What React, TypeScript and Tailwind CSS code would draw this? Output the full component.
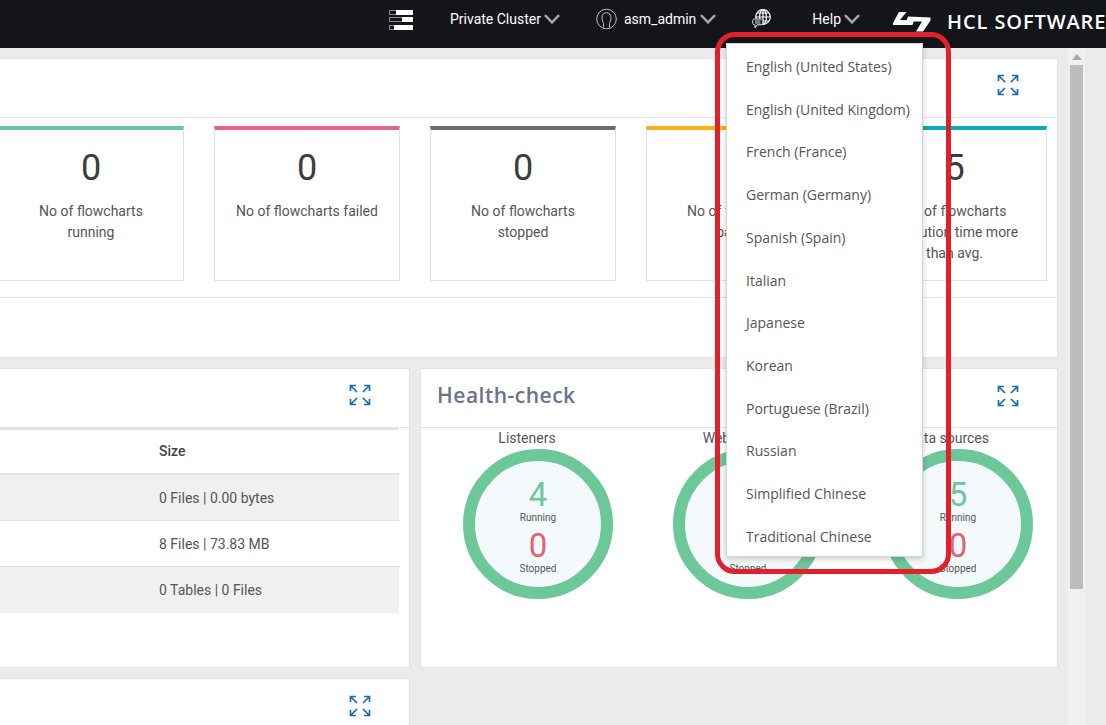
import React from "react";

const languages = [
  "English (United States)",
  "English (United Kingdom)",
  "French (France)",
  "German (Germany)",
  "Spanish (Spain)",
  "Italian",
  "Japanese",
  "Korean",
  "Portuguese (Brazil)",
  "Russian",
  "Simplified Chinese",
  "Traditional Chinese",
];

const Chevron = () => (
  <svg width="16" height="10" viewBox="0 0 16 10" fill="none" className="shrink-0">
    <path d="M1 1.2 L8 8.4 L15 1.2" stroke="#a8a8a8" strokeWidth="2.4" />
  </svg>
);

const ServerIcon = () => (
  <svg width="24" height="20" viewBox="0 0 24 20" className="shrink-0">
    <rect x="0.5" y="0.5" width="23" height="4" fill="none" stroke="#8a8a8a" />
    <rect x="7" y="0" width="17" height="5" fill="#fff" />
    <rect x="0.5" y="7.5" width="23" height="4" fill="none" stroke="#8a8a8a" />
    <rect x="13" y="7" width="11" height="5" fill="#fff" />
    <rect x="0.5" y="15.5" width="23" height="4" fill="none" stroke="#8a8a8a" />
    <rect x="5" y="15" width="19" height="5" fill="#fff" />
  </svg>
);

const UserIcon = () => (
  <svg width="21" height="22" viewBox="0 0 21 22" fill="none" stroke="#c4c4c4" strokeWidth="1" className="shrink-0">
    <circle cx="10.5" cy="11" r="9.8" />
    <path d="M7.5 19.5 V15.5 C7.5 14.5 6 12.5 6 9.5 C6 6.5 8 4.7 10.5 4.7 C13 4.7 15 6.5 15 9.5 C15 12.5 13.5 14.5 13.5 15.5 V19.5" />
  </svg>
);

const GlobeIcon = () => (
  <svg width="19" height="20" viewBox="0 0 19 20" fill="none" className="shrink-0">
    <circle cx="11" cy="8" r="7.3" stroke="#fff" strokeWidth="1.2" />
    <ellipse cx="11" cy="8" rx="3.4" ry="7.3" stroke="#fff" strokeWidth="1.2" />
    <path d="M11 0.7 V15.3 M3.7 8 H18.3 M5 4 H17 M5 12 H17" stroke="#fff" strokeWidth="1.2" />
    <path d="M2.5 10 H9 C10 10 10.8 10.8 10.8 11.8 V14 C10.8 15 10 15.8 9 15.8 H5 L3 18.8 V15.8 H2.5 C1.5 15.8 0.7 15 0.7 14 V11.8 C0.7 10.8 1.5 10 2.5 10 Z" fill="#14151a" stroke="#e5e5e5" strokeWidth="1" />
    <path d="M3 12 H8.5 M3 14 H8.5" stroke="#e5e5e5" strokeWidth="1" />
  </svg>
);

const HclLogo = () => (
  <svg width="38" height="20" viewBox="0 0 38 20" fill="#fff" className="shrink-0">
    <polygon points="6,0 13.5,0 7,8 21,8.5 19.5,13 0,13 0,11" />
    <polygon points="15,4.5 37.5,5.5 37.5,8.5 30,19.5 23,19.5 29,9.5 13,9.5" />
  </svg>
);

const ExpandIcon = () => (
  <svg width="22" height="22" viewBox="0 0 22 22" fill="none" stroke="#1b6cab" strokeWidth="1.7" className="shrink-0">
    <path d="M1.5 7 V1.5 H7 M1.5 1.5 L8 8" />
    <path d="M20.5 7 V1.5 H15 M20.5 1.5 L14 8" />
    <path d="M1.5 15 V20.5 H7 M1.5 20.5 L8 14" />
    <path d="M20.5 15 V20.5 H15 M20.5 20.5 L14 14" />
  </svg>
);

const StatCard = ({ value, label, color, width = "w-[186px]" }: { value: number; label: React.ReactNode; color: string; width?: string }) => (
  <div className={`h-[155px] border border-[#dfe3e5] border-t-4 text-center ${width} ${color}`}>
    <div className="pt-[18px] text-[36px] leading-[40px] text-[#3d3d3d]">{value}</div>
    <div className="mt-[13px] text-sm leading-[21px] text-[#555]">{label}</div>
  </div>
);

const HealthRing = ({ label, labelClass, running }: { label: string; labelClass: string; running: number }) => (
  <div className="w-[150px]">
    <div className={`text-center text-sm leading-[21px] text-[#555] whitespace-nowrap ${labelClass}`}>{label}</div>
    <div className="w-[150px] h-[150px] rounded-full border-[12px] border-[#6cc799] bg-[#f4f9fc] flex flex-col items-center text-center">
      <div className="mt-[15px] text-[33px] leading-[38px] text-[#6cc799]">{running}</div>
      <div className="-mt-[2px] text-[10px] leading-[12px] text-[#555]">Running</div>
      <div className="mt-[3px] text-[33px] leading-[38px] text-[#e0636f]">0</div>
      <div className="-mt-[2px] text-[10px] leading-[12px] text-[#555]">Stopped</div>
    </div>
  </div>
);

export default function App() {
  return (
    <div className="relative w-[1106px] h-[725px] overflow-hidden bg-[#ebebeb] font-['Roboto',sans-serif]">
      <header className="h-12 bg-[#14151a] flex items-center pl-[389px] pb-[10px] text-sm text-white whitespace-nowrap overflow-hidden">
        <span className="mt-[2px]"><ServerIcon /></span>
        <span className="ml-[37px]">Private Cluster</span>
        <span className="ml-[3px]"><Chevron /></span>
        <span className="ml-9"><UserIcon /></span>
        <span className="ml-[7px]">asm_admin</span>
        <span className="ml-1"><Chevron /></span>
        <span className="ml-9"><GlobeIcon /></span>
        <span className="ml-[41px]">Help</span>
        <span className="ml-[3px]"><Chevron /></span>
        <span className="ml-[33px] mt-[6px]"><HclLogo /></span>
        <span className="ml-4 mt-[6px] font-['Open_Sans',sans-serif] font-semibold text-[20px] tracking-[0.9px]">HCL SOFTWARE</span>
      </header>

      <div className="flex h-[677px]">
        <main className="w-[1068px] overflow-hidden pt-[10px]">
          <div className="-ml-3 w-[1070px] flex flex-col gap-[10px]">
            <section className="h-[300px] bg-white border border-[#e3e3e3]">
              <div className="h-[59px] border-b border-[#e3e3e3] flex items-center justify-end pr-[38px] pb-[6px]">
                <ExpandIcon />
              </div>
              <div className="flex gap-[30px] pl-[9px] pt-2 pb-4 border-b border-[#e3e3e3]">
                <StatCard value={0} label={<>No of flowcharts<br />running</>} color="border-t-[#6cc799]" />
                <StatCard value={0} label="No of flowcharts failed" color="border-t-[#e9657f]" />
                <StatCard value={0} label={<>No of flowcharts<br />stopped</>} color="border-t-[#6d6d6d]" />
                <StatCard value={0} label={<>No of flowcharts<br />paused</>} color="border-t-[#f7b217]" />
                <StatCard value={5} width="w-[185px]" label={<>No of flowcharts<br />execution time more<br />than avg.</>} color="border-t-[#0badb8]" />
              </div>
            </section>

            <div className="flex gap-[10px]">
              <section className="w-[422px] h-[300px] bg-white border border-[#e3e3e3]">
                <div className="h-[59px] border-b border-[#e3e3e3] flex items-center justify-end pr-[38px] pb-[6px]">
                  <ExpandIcon />
                </div>
                <div className="mr-[10px] text-sm text-[#555]">
                  <div className="h-[47px] border-t-2 border-b-2 border-[#e3e3e3] pl-[170px] pb-[2px] flex items-center font-medium text-[#444]">Size</div>
                  <div className="h-[46px] bg-[#f0f0f0] border-b border-[#e0e0e0] pl-[170px] flex items-center">0 Files | 0.00 bytes</div>
                  <div className="h-[46px] border-b border-[#e0e0e0] pl-[170px] flex items-center">8 Files | 73.83 MB</div>
                  <div className="h-[46px] bg-[#f0f0f0] pl-[170px] flex items-center">0 Tables | 0 Files</div>
                </div>
              </section>

              <section className="w-[638px] h-[300px] bg-white border border-[#e3e3e3]">
                <div className="h-[59px] border-b border-[#e3e3e3] flex items-center justify-between pl-4 pr-[38px] pb-[5px]">
                  <span className="font-['Open_Sans',sans-serif] text-[21px] font-semibold tracking-[0.5px] text-[#6b7390]">Health-check</span>
                  <ExpandIcon />
                </div>
                <div className="flex gap-[60px] pl-[42px]">
                  <HealthRing label="Listeners" labelClass="pr-[22px]" running={4} />
                  <HealthRing label="Web services" labelClass="pr-2" running={3} />
                  <HealthRing label="Data sources" labelClass="pr-5" running={5} />
                </div>
              </section>
            </div>

            <section className="w-[422px] h-[100px] bg-white border border-[#e3e3e3]">
              <div className="h-[59px] flex items-center justify-end pr-[38px] pb-[6px]">
                <ExpandIcon />
              </div>
            </section>
          </div>
        </main>

        <div className="w-[17px] bg-[#f0f0f0] flex flex-col items-center">
          <div className="mt-[6px] w-0 h-0 border-x-[5px] border-x-transparent border-b-[6px] border-b-[#a8a8a8]" />
          <div className="mt-[5px] w-[13px] h-[524px] bg-[#bdbdbd]" />
        </div>
      </div>

      <div className="absolute left-[726px] top-[43px] w-[197px] h-[514px] bg-white border border-[#d6d6d6] shadow-[0_2px_6px_rgba(0,0,0,0.2)] pt-[1.6px] font-['Open_Sans',sans-serif] text-sm text-[#555]">
        {languages.map((lang) => (
          <div key={lang} className="h-[42.73px] pl-[19px] flex items-center whitespace-nowrap">
            {lang}
          </div>
        ))}
      </div>

      <div className="absolute left-[715px] top-8 w-[236px] h-[542px] border-[5px] border-[#e2202c] rounded-[20px] pointer-events-none" />
    </div>
  );
}
